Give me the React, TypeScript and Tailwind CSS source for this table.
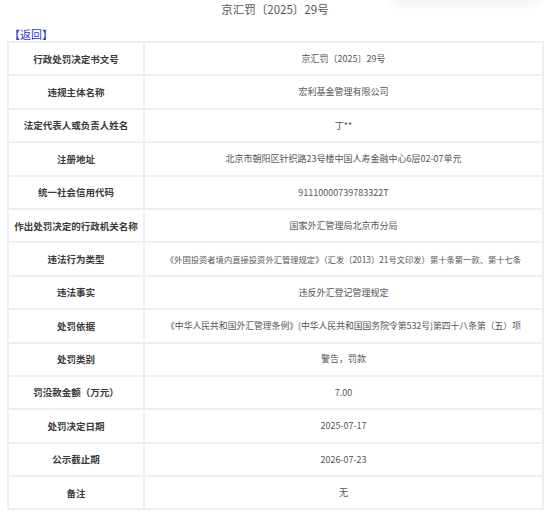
const rows: [string, string, string?][] = [
  ["行政处罚决定书文号", "京汇罚〔2025〕29号"],
  ["违规主体名称", "宏利基金管理有限公司"],
  ["法定代表人或负责人姓名", "丁**"],
  ["注册地址", "北京市朝阳区针织路23号楼中国人寿金融中心6层02-07单元"],
  ["统一社会信用代码", "91110000739783322T"],
  ["作出处罚决定的行政机关名称", "国家外汇管理局北京市分局"],
  ["违法行为类型", "《外国投资者境内直接投资外汇管理规定》（汇发〔2013〕21号文印发）第十条第一款、第十七条", "text-[8.3px]"],
  ["违法事实", "违反外汇登记管理规定"],
  ["处罚依据", "《中华人民共和国外汇管理条例》(中华人民共和国国务院令第532号)第四十八条第（五）项", "text-[8.8px]"],
  ["处罚类别", "警告，罚款"],
  ["罚没款金额（万元）", "7.00"],
  ["处罚决定日期", "2025-07-17"],
  ["公示截止期", "2026-07-23"],
  ["备注", "无"],
];

export default function App() {
  return (
    <div className="relative w-[550px] h-[513px] overflow-hidden bg-white font-['Noto_Sans_CJK_SC','Noto_Sans',sans-serif]">
      <div className="absolute right-[10px] top-[-6px] w-[150px] h-[12px] rounded-full bg-[#f5f5f5] blur-[3px]" />
      <div className="pt-[1px] h-[18px] text-center text-[11.5px] leading-[16px] text-[#555]">京汇罚〔2025〕29号</div>
      <div className="pl-[9px] mt-[9px] h-[14px] text-[11px] leading-[14px] text-[#1d33c9]">【返回】</div>
      <table className="ml-[7px] w-[537px] border-collapse border-2 border-[#eceff3] table-fixed">
        <tbody>
          {rows.map(([label, value, size]) => (
            <tr key={label} className="h-[33.4px]">
              <td className="w-[136px] border-2 border-[#eceff3] text-center text-[9.5px] font-bold text-[#3a3a3a] whitespace-nowrap p-0">
                {label}
              </td>
              <td className={`border-2 border-[#eceff3] text-center ${size ?? "text-[9px]"} text-[#555] whitespace-nowrap p-0`}>
                {value}
              </td>
            </tr>
          ))}
        </tbody>
      </table>
    </div>
  );
}
